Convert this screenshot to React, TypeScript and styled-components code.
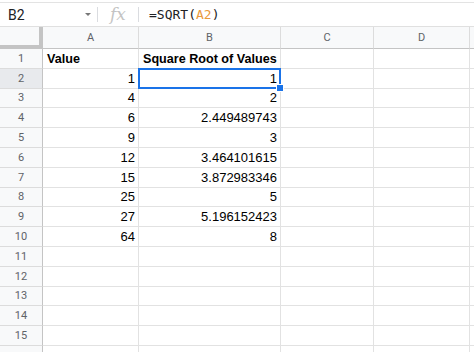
import React from "react";
import styled, { createGlobalStyle } from "styled-components";

const GlobalStyle = createGlobalStyle`
  html, body { margin: 0; padding: 0; background: #ffffff; }
  body { font-family: "Liberation Sans", Arial, sans-serif; overflow: hidden; }
  * { box-sizing: border-box; }
`;

const Page = styled.div`
  width: 474px;
  height: 352px;
  overflow: hidden;
  padding-top: 2px;
  background: #fff;
`;

const FormulaBar = styled.div`
  display: flex;
  align-items: center;
  height: 25px;
  border-top: 1px solid #e3e3e3;
  border-bottom: 1px solid #e0e0e0;
`;

const NameBox = styled.div`
  width: 97px;
  display: flex;
  align-items: center;
  justify-content: space-between;
  padding: 0 6px 0 8px;
  font-family: Roboto, "Liberation Sans", sans-serif;
  font-size: 14px;
  color: #202124;
`;

const Caret = styled.span`
  width: 0;
  height: 0;
  border-left: 3px solid transparent;
  border-right: 3px solid transparent;
  border-top: 3px solid #777;
`;

const Divider = styled.span`
  width: 1px;
  height: 15px;
  background: #dadce0;
`;

const Fx = styled.div`
  width: 40px;
  text-align: center;
  font-family: "DejaVu Serif", "Liberation Serif", serif;
  font-style: italic;
  font-size: 17px;
  color: #c4c4c4;
  line-height: 1;
`;

const Formula = styled.div`
  padding-left: 10px;
  font-family: "DejaVu Sans Mono", "Liberation Mono", monospace;
  font-size: 13px;
  color: #202124;
`;

const Ref = styled.span`
  color: #e99a3c;
`;

const Grid = styled.div`
  display: grid;
  grid-template-columns: 43px 96px 142px 93px 96px 1fr;
  grid-template-rows: 22px;
  grid-auto-rows: 19.8px;
`;

const Corner = styled.div`
  background: #f8f9fa;
  border-right: 4px solid #c4c4c4;
  border-bottom: 4px solid #c4c4c4;
`;

const ColHeader = styled.div`
  background: #f8f9fa;
  border-right: 1px solid #dcdcdc;
  border-bottom: 1px solid #c4c4c4;
  display: flex;
  align-items: center;
  justify-content: center;
  font-family: Roboto, "Liberation Sans", sans-serif;
  font-size: 11px;
  color: #5f6368;
`;

const RowHeader = styled.div<{ $active?: boolean }>`
  background: ${(p) => (p.$active ? "#e8eaed" : "#f8f9fa")};
  border-right: 1px solid #c4c4c4;
  border-bottom: 1px solid #dcdcdc;
  display: flex;
  align-items: center;
  justify-content: center;
  font-family: Roboto, "Liberation Sans", sans-serif;
  font-size: 11px;
  color: #5f6368;
`;

const Cell = styled.div<{ $bold?: boolean; $num?: boolean }>`
  position: relative;
  border-right: 1px solid #e2e2e2;
  border-bottom: 1px solid #e2e2e2;
  display: flex;
  align-items: flex-end;
  justify-content: ${(p) => (p.$num ? "flex-end" : "flex-start")};
  padding: 0 3px 2px 4px;
  font-size: ${(p) => (p.$bold ? "12.6px" : "13px")};
  font-weight: ${(p) => (p.$bold ? 700 : 400)};
  color: #000;
  white-space: nowrap;
  overflow: visible;
`;

const Selection = styled.div`
  position: absolute;
  left: -1px;
  top: -1px;
  right: -1px;
  bottom: -1px;
  border: 2px solid #1a73e8;
  pointer-events: none;
`;

const Handle = styled.div`
  position: absolute;
  right: -4px;
  bottom: -4px;
  width: 6px;
  height: 6px;
  background: #1a73e8;
  border: 1px solid #fff;
  box-sizing: content-box;
  z-index: 2;
`;

const cols = ["A", "B", "C", "D", ""];

const data: [string, string][] = [
  ["Value", "Square Root of Values"],
  ["1", "1"],
  ["4", "2"],
  ["6", "2.449489743"],
  ["9", "3"],
  ["12", "3.464101615"],
  ["15", "3.872983346"],
  ["25", "5"],
  ["27", "5.196152423"],
  ["64", "8"],
];

export default function App() {
  const rows = Array.from({ length: 16 }, (_, i) => i + 1);
  return (
    <Page>
      <GlobalStyle />
      <FormulaBar>
        <NameBox>
          <span>B2</span>
          <Caret />
        </NameBox>
        <Divider />
        <Fx>fx</Fx>
        <Divider />
        <Formula>
          =SQRT(<Ref>A2</Ref>)
        </Formula>
      </FormulaBar>
      <Grid>
        <Corner />
        {cols.map((c, i) => (
          <ColHeader key={i}>{c}</ColHeader>
        ))}
        {rows.map((r) => {
          const d = data[r - 1];
          const header = r === 1;
          return (
            <React.Fragment key={r}>
              <RowHeader $active={r === 2}>{r <= 15 ? r : ""}</RowHeader>
              <Cell $bold={header} $num={!header && !!d}>
                {d ? d[0] : ""}
              </Cell>
              <Cell $bold={header} $num={!header && !!d}>
                {d ? d[1] : ""}
                {r === 2 && (
                  <>
                    <Selection />
                    <Handle />
                  </>
                )}
              </Cell>
              <Cell />
              <Cell />
              <Cell />
            </React.Fragment>
          );
        })}
      </Grid>
    </Page>
  );
}
